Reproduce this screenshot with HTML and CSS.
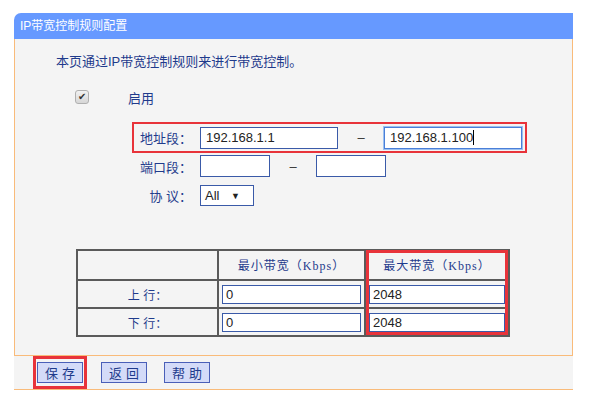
FILE: index.html
```html
<!DOCTYPE html>
<html lang="zh-CN">
<head>
    <meta charset="UTF-8">
    <title>IP带宽控制规则配置</title>
    <link rel="stylesheet" href="styles.css">
</head>
<body>
    <div class="panel">
        <div class="panel-head">IP带宽控制规则配置</div>
        <div class="panel-body">
            <p class="intro">本页通过IP带宽控制规则来进行带宽控制。</p>
            <div class="enable-row">
                <span class="check">&#10004;</span>
                <span class="enable-label">启用</span>
            </div>
            <div class="form">
                <div class="form-row highlight">
                    <span class="label">地址段：</span>
                    <span class="input wide">192.168.1.1</span>
                    <span class="dash">–</span>
                    <span class="input wide focus">192.168.1.100<i class="caret"></i></span>
                </div>
                <div class="form-row">
                    <span class="label">端口段：</span>
                    <span class="input short"></span>
                    <span class="dash">–</span>
                    <span class="input short"></span>
                </div>
                <div class="form-row">
                    <span class="label">协&nbsp;议：</span>
                    <span class="select">All <span class="arrow">&#9660;</span></span>
                </div>
            </div>
            <div class="table-wrap">
                <table class="bw-table">
                    <tr class="head">
                        <th></th>
                        <th>最小带宽（Kbps）</th>
                        <th>最大带宽（Kbps）</th>
                    </tr>
                    <tr>
                        <td class="row-label">上&nbsp;行：</td>
                        <td><span class="cell-input">0</span></td>
                        <td><span class="cell-input">2048</span></td>
                    </tr>
                    <tr>
                        <td class="row-label">下&nbsp;行：</td>
                        <td><span class="cell-input">0</span></td>
                        <td><span class="cell-input">2048</span></td>
                    </tr>
                </table>
                <div class="mark-col"></div>
            </div>
        </div>
        <div class="panel-foot">
            <span class="btn-mark"><button class="btn">保存</button></span>
            <button class="btn">返回</button>
            <button class="btn">帮助</button>
        </div>
    </div>
</body>
</html>
```

FILE: styles.css
```css
* {
    margin: 0;
    padding: 0;
    box-sizing: border-box;
}
:root {
    --head-color: #6699ff;
    --panel-bg: #f4f4f4;
    --orange: #f9bb7a;
    --text-blue: #1f3b8c;
    --input-border: #3a5aa8;
    --red: #e8333a;
}
body {
    font-family: "Liberation Sans", "Noto Sans CJK SC", sans-serif;
    background: #fff;
    color: var(--text-blue);
    font-size: 12px;
}
.panel {
    width: 559px;
    margin: 13px 0 0 14px;
}
.panel-head {
    height: 26px;
    line-height: 26px;
    background: var(--head-color);
    color: #fff;
    padding-left: 6px;
    border-top-left-radius: 7px;
    font-size: 12px;
}
.panel-body {
    height: 316px;
    background: var(--panel-bg);
    border-left: 1px solid var(--orange);
    border-right: 1px solid var(--orange);
    padding-top: 14px;
}
.intro {
    font-size: 13px;
    line-height: 18px;
    padding-left: 41px;
}
.enable-row {
    display: flex;
    align-items: center;
    height: 18px;
    margin-top: 17px;
    padding-left: 60px;
}
.check {
    width: 14px;
    height: 14px;
    border: 1px solid #b0b0b0;
    border-radius: 3px;
    background: linear-gradient(#f2f2f2, #d6d6d6);
    color: #333;
    font-size: 10px;
    line-height: 12px;
    text-align: center;
}
.enable-label {
    margin-left: 39px;
    font-size: 13px;
}
.form {
    margin: 16px 0 0 117px;
}
.form-row {
    display: flex;
    align-items: center;
    width: 395px;
    height: 22px;
    padding-left: 2px;
    margin-bottom: 7px;
}
.form-row.highlight {
    height: 31px;
    border: 2px solid var(--red);
    padding-left: 0;
    margin-bottom: 2px;
}
.label {
    width: 66px;
    text-align: right;
    padding-right: 8px;
    font-size: 13px;
}
.input {
    height: 22px;
    border: 1px solid var(--input-border);
    background: #fff;
    color: #222;
    font-size: 13px;
    line-height: 20px;
    padding-left: 5px;
}
.input.wide {
    width: 138px;
}
.input.short {
    width: 70px;
}
.input.focus {
    border-color: #4a7fd8;
    box-shadow: 0 0 0 1px #9cc0f0;
}
.caret {
    display: inline-block;
    width: 1px;
    height: 15px;
    background: #000;
    vertical-align: -3px;
}
.dash {
    width: 46px;
    text-align: center;
    color: #333;
    font-size: 13px;
}
.select {
    width: 54px;
    height: 21px;
    border: 1px solid var(--input-border);
    background: #fff;
    color: #222;
    font-size: 13px;
    line-height: 19px;
    padding-left: 4px;
}
.arrow {
    font-size: 9px;
    margin-left: 8px;
    vertical-align: 1px;
}
.table-wrap {
    position: relative;
    width: 434px;
    margin: 43px 0 0 61px;
}
.bw-table {
    width: 434px;
    border-collapse: collapse;
    border: 2px solid #5a5a5a;
}
.bw-table th,
.bw-table td {
    border: 1px solid #5a5a5a;
    border-width: 2px 2px 1px 1px;
    font-weight: normal;
    text-align: center;
    font-size: 12px;
}
.bw-table th {
    height: 30px;
    font-family: "Liberation Serif", "Noto Sans CJK SC", serif;
    letter-spacing: 1px;
}
.bw-table th:first-child,
.bw-table td:first-child {
    width: 141px;
}
.bw-table th:nth-child(2),
.bw-table td:nth-child(2) {
    width: 147px;
}
.bw-table td {
    height: 28px;
    padding: 0 3px;
}
.row-label {
    font-size: 13px;
}
.cell-input {
    display: block;
    height: 19px;
    border: 1px solid var(--input-border);
    background: #fff;
    color: #222;
    font-size: 13px;
    line-height: 17px;
    text-align: left;
    padding-left: 3px;
}
.mark-col {
    position: absolute;
    left: 290px;
    top: 1px;
    width: 142px;
    height: 85px;
    border: 3px solid var(--red);
}
.panel-foot {
    display: flex;
    align-items: center;
    height: 35px;
    border-top: 1px solid var(--orange);
    border-bottom: 1px solid var(--orange);
    background: var(--panel-bg);
    padding-left: 19px;
    gap: 17px;
}
.btn-mark {
    display: flex;
    height: 33px;
    align-items: center;
    border: 3px solid var(--red);
    padding: 0 1px;
    margin-right: -3px;
}
.btn {
    width: 46px;
    height: 21px;
    border: 1px solid #4a5fb8;
    background: #d4dbf8;
    color: #1f3b8c;
    font-family: "Noto Sans CJK SC", sans-serif;
    font-size: 13px;
    letter-spacing: 4px;
    text-indent: 4px;
    line-height: 19px;
}
```
